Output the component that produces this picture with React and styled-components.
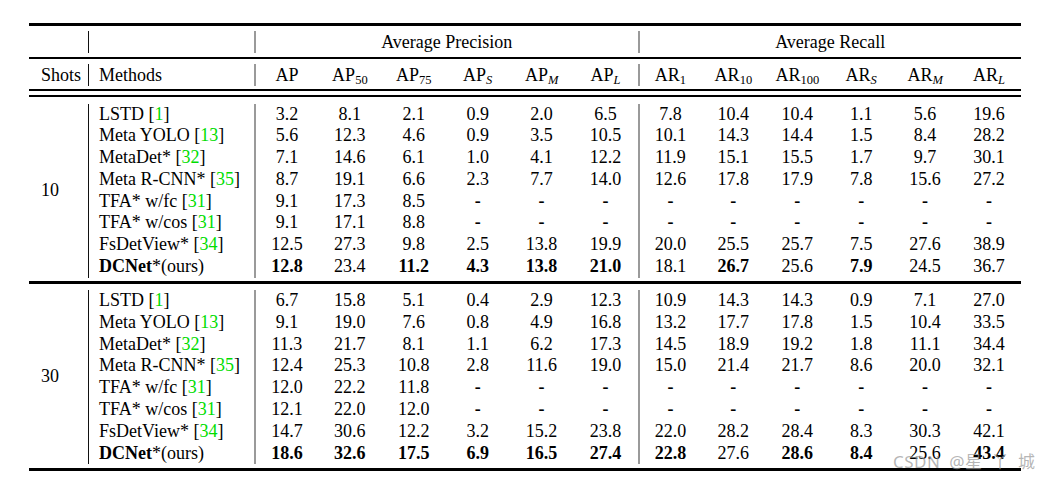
import React from "react";
import styled, { createGlobalStyle } from "styled-components";

const GlobalStyle = createGlobalStyle`
  html, body { margin: 0; padding: 0; background: #fff; }
`;

const COLS = "59px 166px repeat(12, minmax(0, 1fr))";
const ROW_H = 21.8;

const Page = styled.div`
  position: relative;
  width: 1050px;
  height: 479px;
  box-sizing: border-box;
  padding: 23px 0 0 29px;
  overflow: hidden;
`;

const Table = styled.div`
  width: 992px;
  font-family: "Liberation Serif", "Times New Roman", serif;
  font-size: 18px;
  color: #000;
`;

const Rule = styled.div`
  height: ${(p) => p.$h}px;
  background: #000;
`;

const DoubleRule = styled.div`
  height: 4px;
  border-top: 2px solid #000;
  border-bottom: 2px solid #000;
`;

const Block = styled.div`
  display: grid;
  grid-template-columns: ${COLS};
  grid-auto-rows: ${(p) => p.$rh}px;
  line-height: ${(p) => p.$rh}px;
  padding: ${(p) => p.$pt}px 0 ${(p) => p.$pb}px;
`;

const ShotsCell = styled.div`
  grid-column: 1;
  grid-row: ${(p) => (p.$span ? `1 / span ${p.$span}` : "auto")};
  display: flex;
  align-items: center;
  padding-left: 12px;
  white-space: nowrap;
`;

const MethodCell = styled.div`
  border-left: 1px solid #111;
  padding-left: 10px;
  white-space: nowrap;
`;

const NumCell = styled.div`
  text-align: center;
  white-space: nowrap;
  font-weight: ${(p) => (p.$bold ? 700 : 400)};
  border-left: ${(p) => (p.$sep ? "2px solid #9a9a9a" : "none")};
`;

const GroupHead = styled.div`
  grid-column: span 6;
  text-align: center;
  border-left: 2px solid #9a9a9a;
`;

const Cite = styled.span`
  color: #00dd00;
`;

const Strong = styled.span`
  font-weight: 700;
`;

const Sub = styled.sub`
  font-size: 12.5px;
  line-height: 0;
  vertical-align: -3px;
  font-style: ${(p) => (p.$it ? "italic" : "normal")};
`;

const Watermark = styled.div`
  position: absolute;
  left: 893px;
  top: 448px;
  font-family: "Noto Sans", "Noto Sans CJK SC", sans-serif;
  font-size: 17px;
  color: rgba(150, 150, 150, 0.7);
  white-space: nowrap;
  letter-spacing: 0.5px;
  word-spacing: 4px;
`;

const apHeads = [
  ["AP", null, false],
  ["AP", "50", false],
  ["AP", "75", false],
  ["AP", "S", true],
  ["AP", "M", true],
  ["AP", "L", true],
  ["AR", "1", false],
  ["AR", "10", false],
  ["AR", "100", false],
  ["AR", "S", true],
  ["AR", "M", true],
  ["AR", "L", true],
];

const method = (name, cite) => (
  <>
    {name} [<Cite>{cite}</Cite>]
  </>
);

const ours = (
  <>
    <Strong>DCNet</Strong>*(ours)
  </>
);

const D = ["!-", "!-", "!-", "!-", "!-", "!-"];

const block10 = [
  [method("LSTD", "1"), "3.2 8.1 2.1 0.9 2.0 6.5 7.8 10.4 10.4 1.1 5.6 19.6".split(" ")],
  [method("Meta YOLO", "13"), "5.6 12.3 4.6 0.9 3.5 10.5 10.1 14.3 14.4 1.5 8.4 28.2".split(" ")],
  [method("MetaDet*", "32"), "7.1 14.6 6.1 1.0 4.1 12.2 11.9 15.1 15.5 1.7 9.7 30.1".split(" ")],
  [method("Meta R-CNN*", "35"), "8.7 19.1 6.6 2.3 7.7 14.0 12.6 17.8 17.9 7.8 15.6 27.2".split(" ")],
  [method("TFA* w/fc", "31"), ["9.1", "17.3", "8.5", "!-", "!-", "!-", ...D]],
  [method("TFA* w/cos", "31"), ["9.1", "17.1", "8.8", "!-", "!-", "!-", ...D]],
  [method("FsDetView*", "34"), "12.5 27.3 9.8 2.5 13.8 19.9 20.0 25.5 25.7 7.5 27.6 38.9".split(" ")],
  [ours, "!12.8 23.4 !11.2 !4.3 !13.8 !21.0 18.1 !26.7 25.6 !7.9 24.5 36.7".split(" ")],
];

const block30 = [
  [method("LSTD", "1"), "6.7 15.8 5.1 0.4 2.9 12.3 10.9 14.3 14.3 0.9 7.1 27.0".split(" ")],
  [method("Meta YOLO", "13"), "9.1 19.0 7.6 0.8 4.9 16.8 13.2 17.7 17.8 1.5 10.4 33.5".split(" ")],
  [method("MetaDet*", "32"), "11.3 21.7 8.1 1.1 6.2 17.3 14.5 18.9 19.2 1.8 11.1 34.4".split(" ")],
  [method("Meta R-CNN*", "35"), "12.4 25.3 10.8 2.8 11.6 19.0 15.0 21.4 21.7 8.6 20.0 32.1".split(" ")],
  [method("TFA* w/fc", "31"), ["12.0", "22.2", "11.8", "!-", "!-", "!-", ...D]],
  [method("TFA* w/cos", "31"), ["12.1", "22.0", "12.0", "!-", "!-", "!-", ...D]],
  [method("FsDetView*", "34"), "14.7 30.6 12.2 3.2 15.2 23.8 22.0 28.2 28.4 8.3 30.3 42.1".split(" ")],
  [ours, "!18.6 !32.6 !17.5 !6.9 !16.5 !27.4 !22.8 27.6 !28.6 !8.4 25.6 !43.4".split(" ")],
];

function DataBlock({ shots, rows, pt, pb }) {
  return (
    <Block $rh={ROW_H} $pt={pt} $pb={pb}>
      <ShotsCell $span={rows.length}>{shots}</ShotsCell>
      {rows.map(([name, vals], r) => (
        <React.Fragment key={r}>
          <MethodCell>{name}</MethodCell>
          {vals.map((v, i) => {
            const bold = v.startsWith("!");
            return (
              <NumCell key={i} $bold={bold} $sep={i === 0 || i === 6}>
                {bold ? v.slice(1) : v}
              </NumCell>
            );
          })}
        </React.Fragment>
      ))}
    </Block>
  );
}

export default function App() {
  return (
    <>
      <GlobalStyle />
      <Page>
        <Table>
          <Rule $h={3} />
          <Block $rh={22} $pt={5} $pb={4}>
            <ShotsCell />
            <MethodCell />
            <GroupHead>Average Precision</GroupHead>
            <GroupHead>Average Recall</GroupHead>
          </Block>
          <Rule $h={2} />
          <Block $rh={22} $pt={5} $pb={3}>
            <ShotsCell>Shots</ShotsCell>
            <MethodCell>Methods</MethodCell>
            {apHeads.map(([base, sub, it], i) => (
              <NumCell key={i} $sep={i === 0 || i === 6}>
                {base}
                {sub && <Sub $it={it}>{sub}</Sub>}
              </NumCell>
            ))}
          </Block>
          <DoubleRule />
          <DataBlock shots="10" rows={block10} pt={6.5} pb={3.1} />
          <Rule $h={3} />
          <DataBlock shots="30" rows={block30} pt={6} pb={3.6} />
          <Rule $h={3} />
        </Table>
        <Watermark>CSDN @星 丫 城</Watermark>
      </Page>
    </>
  );
}
